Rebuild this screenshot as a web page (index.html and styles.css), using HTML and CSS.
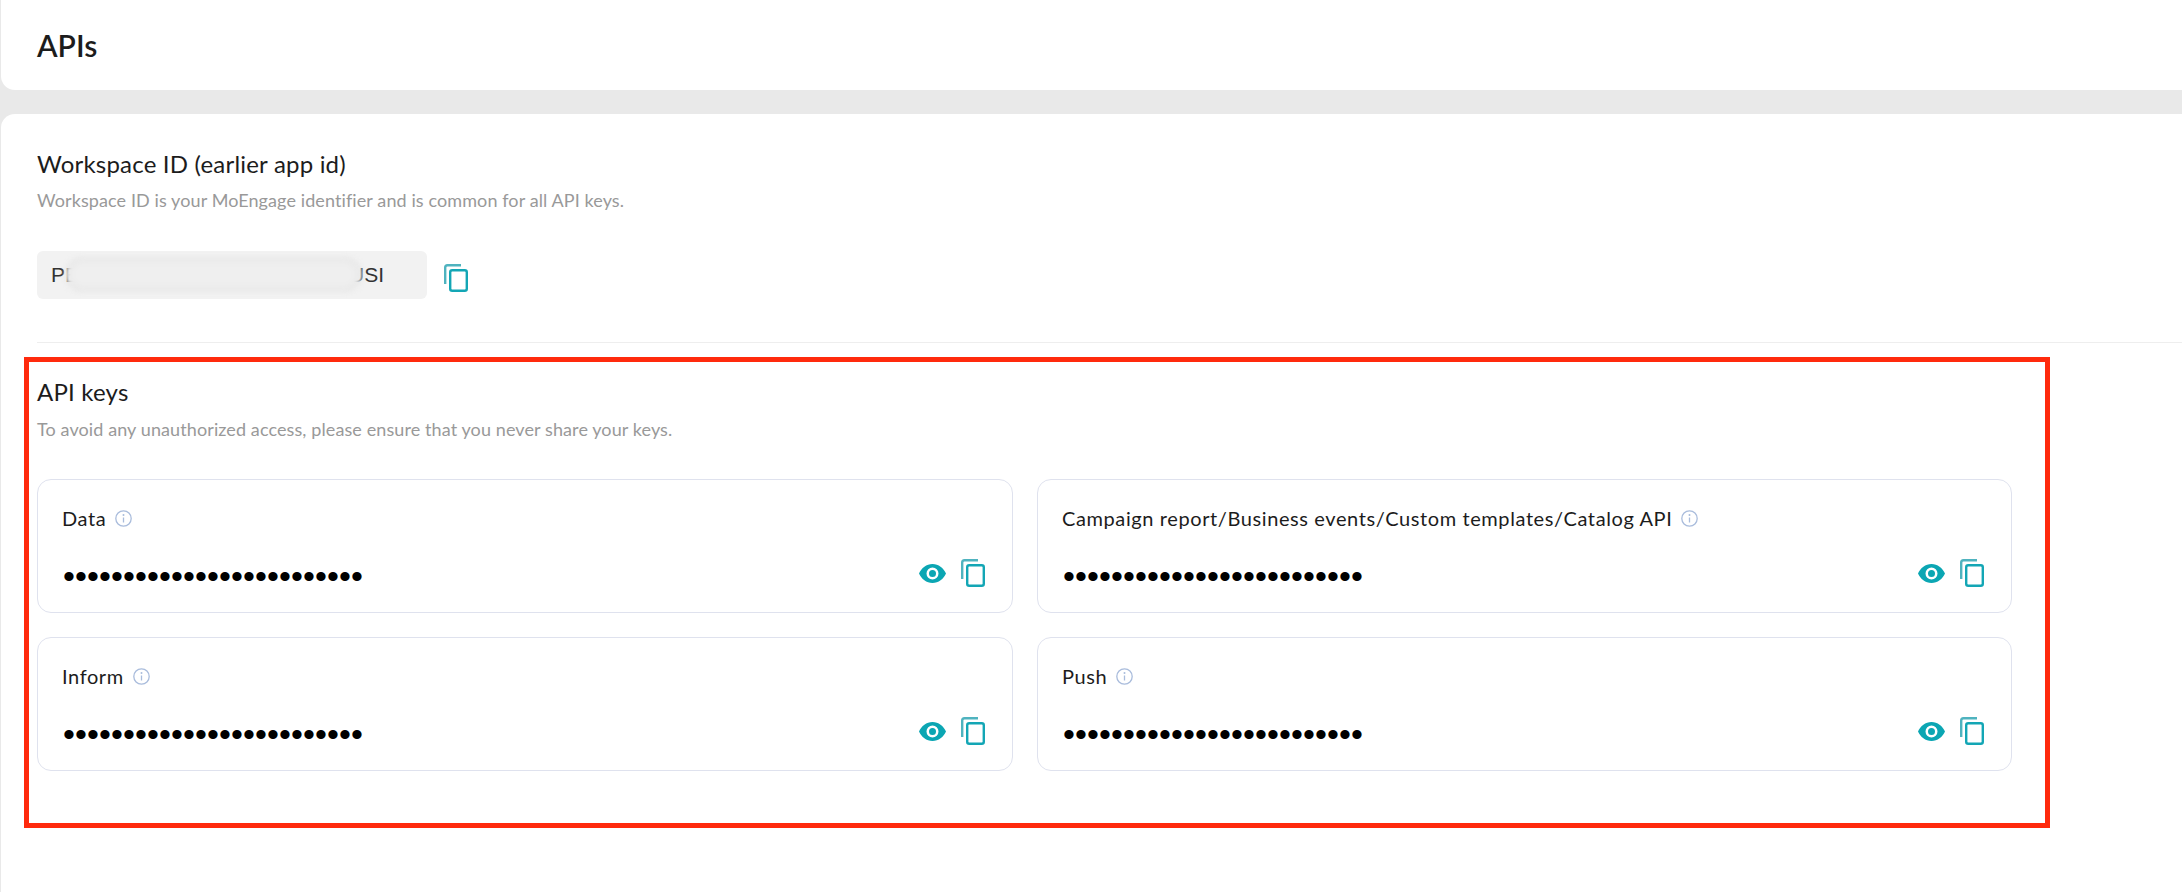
FILE: index.html
```html
<!DOCTYPE html>
<html lang="en">
<head>
<meta charset="utf-8">
<title>APIs</title>
<link rel="stylesheet" href="styles.css">
</head>
<body>
<svg class="sprites" width="0" height="0" aria-hidden="true">
  <symbol id="eye" viewBox="0 0 27 19"><path fill-rule="evenodd" d="M13.5 0C7.4 0 2.500 3.900 0 9.500 2.500 15.100 7.400 19 13.500 19S24.500 15.100 27 9.500C24.500 3.900 19.600 0 13.500 0ZM13.500 15.500a6 6 0 1 1 0-12 6 6 0 0 1 0 12ZM13.500 6a3.500 3.500 0 1 0 0 7 3.500 3.500 0 0 0 0-7Z"/></symbol>
  <symbol id="copy" viewBox="0 0 24 28"><path class="copy-back" d="M1.200 20V3.500A2.300 2.300 0 0 1 3.500 1.200H17"/><rect class="copy-front" x="6.200" y="6.200" width="16.600" height="20.600" rx="2"/></symbol>
  <symbol id="info" viewBox="0 0 17 17"><circle class="info-ring" cx="8.500" cy="8.500" r="7.700"/><circle class="info-dot" cx="8.500" cy="5" r="1"/><path class="info-stem" d="M8.500 7.500v5"/></symbol>
</svg>
<div class="page">
  <header class="top-card"><h1 class="page-title">APIs</h1></header>
  <main class="panel">
    <section class="workspace">
      <h2 class="section-title">Workspace ID (earlier app id)</h2>
      <p class="section-desc">Workspace ID is your MoEngage identifier and is common for all API keys.</p>
      <div class="id-row">
        <div class="id-field"><span>PE</span><span>USI</span><i class="id-blur"></i></div>
        <svg class="icon-copy"><use href="#copy"/></svg>
      </div>
    </section>
    <hr class="divider">
    <section class="keys">
      <h2 class="section-title">API keys</h2>
      <p class="section-desc">To avoid any unauthorized access, please ensure that you never share your keys.</p>
      <div class="key-grid">
        <article class="key-card">
          <div class="key-label">Data <svg class="icon-info"><use href="#info"/></svg></div>
          <div class="key-row"><span class="key-dots">•••••••••••••••••••••••••</span><svg class="icon-eye"><use href="#eye"/></svg><svg class="icon-copy"><use href="#copy"/></svg></div>
        </article>
        <article class="key-card">
          <div class="key-label">Campaign report/Business events/Custom templates/Catalog API <svg class="icon-info"><use href="#info"/></svg></div>
          <div class="key-row"><span class="key-dots">•••••••••••••••••••••••••</span><svg class="icon-eye"><use href="#eye"/></svg><svg class="icon-copy"><use href="#copy"/></svg></div>
        </article>
        <article class="key-card">
          <div class="key-label">Inform <svg class="icon-info"><use href="#info"/></svg></div>
          <div class="key-row"><span class="key-dots">•••••••••••••••••••••••••</span><svg class="icon-eye"><use href="#eye"/></svg><svg class="icon-copy"><use href="#copy"/></svg></div>
        </article>
        <article class="key-card">
          <div class="key-label">Push <svg class="icon-info"><use href="#info"/></svg></div>
          <div class="key-row"><span class="key-dots">•••••••••••••••••••••••••</span><svg class="icon-eye"><use href="#eye"/></svg><svg class="icon-copy"><use href="#copy"/></svg></div>
        </article>
      </div>
    </section>
  </main>
</div>
</body>
</html>
```
FILE: styles.css
```css
* { box-sizing: border-box; }
html, body { margin: 0; height: 100%; }
body {
  background: #e9e9e9;
  color: #1c1c1c;
  font-family: "Lato", "Liberation Sans", sans-serif;
  overflow: hidden;
}
.sprites { position: absolute; }
.page { padding-left: 1px; height: 892px; display: flex; flex-direction: column; gap: 24px; }
.top-card {
  height: 90px;
  background: #fff;
  border-radius: 0 0 0 14px;
  padding: 27px 0 0 36px;
}
.page-title { margin: 0; font-size: 30px; line-height: 36px; font-weight: 600; }
.panel {
  flex: 1;
  background: #fff;
  border-radius: 14px 0 0 0;
}
.workspace { padding: 36px 0 0 36px; }
.section-title { margin: 0; font-size: 24px; line-height: 28px; font-weight: 400; letter-spacing: 0.2px; }
.section-desc { margin: 11px 0 0; font-size: 18px; line-height: 22px; color: #999; letter-spacing: 0.1px; }
.id-row { display: flex; align-items: flex-start; gap: 17px; margin-top: 40px; }
.id-field {
  position: relative;
  width: 390px;
  height: 48px;
  padding: 0 43px 0 14px;
  display: flex;
  align-items: center;
  justify-content: space-between;
  background: #f2f2f2;
  border-radius: 6px;
  font: 21px "Liberation Sans", sans-serif;
  color: #333;
}
.id-blur {
  position: absolute;
  left: 28px;
  top: 6px;
  width: 297px;
  height: 35px;
  background: #efefef;
  border-radius: 18px;
  box-shadow: inset 0 0 10px #dedede;
  filter: blur(2.500px);
}
.id-row .icon-copy { margin-top: 13px; }
.divider { margin: 43px 0 0 36px; border: 0; border-top: 1px solid #eee; }
.keys {
  width: 2026px;
  height: 471px;
  margin: 14px 0 0 23px;
  padding: 16px 0 0 8px;
  border: 5px solid #ff2a0d;
}
.keys .section-desc { margin-top: 12px; }
.key-grid {
  display: grid;
  grid-template-columns: 976px 975px;
  grid-auto-rows: 134px;
  gap: 24px;
  margin-top: 39px;
}
.key-card {
  border: 1px solid #dfe2ee;
  border-radius: 14px;
  padding: 25px 27px 0 25px;
}
.key-label { display: flex; align-items: center; gap: 9px; margin-left: -1px; font-size: 20px; line-height: 26px; letter-spacing: 0.6px; }
.key-row { display: flex; align-items: center; gap: 15px; margin-top: 27px; height: 30px; }
.key-dots { flex: 1; font: 34px/30px "Liberation Sans", sans-serif; letter-spacing: 0.1px; color: #000; position: relative; top: 3px; }
.icon-eye { width: 27px; height: 19px; fill: #0ba6b3; flex: none; }
.icon-copy { width: 24px; height: 28px; flex: none; fill: none; }
.copy-back { stroke: #4fb3bf; stroke-width: 2.400; fill: none; }
.copy-front { stroke: #13a6b5; stroke-width: 2.400; fill: none; }
.icon-info { width: 17px; height: 17px; flex: none; }
.info-ring { fill: none; stroke: #a9bcdc; stroke-width: 1.300; }
.info-dot { fill: #a9bcdc; }
.info-stem { stroke: #a9bcdc; stroke-width: 1.300; }
```
